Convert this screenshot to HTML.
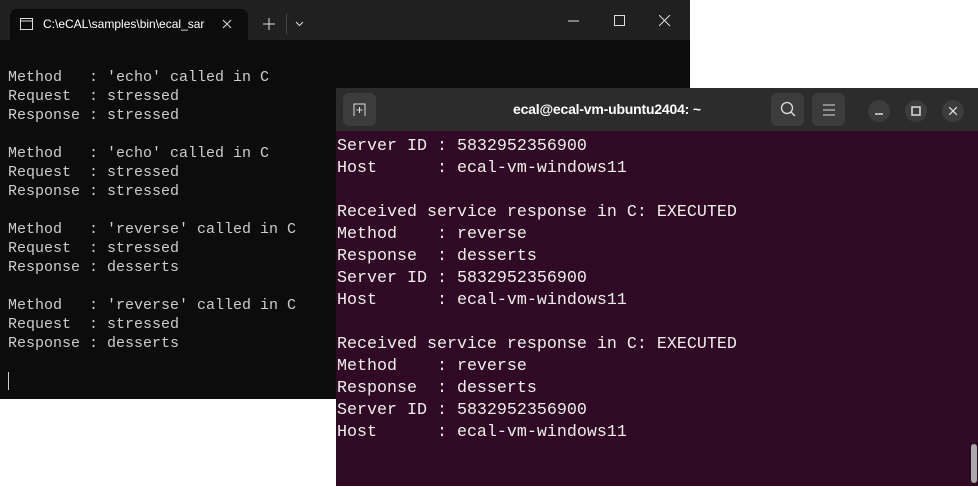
<!DOCTYPE html>
<html><head><style>
html,body{margin:0;padding:0;width:978px;height:490px;background:#fff;overflow:hidden;position:relative}
.win{position:absolute;left:0;top:0;width:690px;height:399px;background:#0c0c0c}
.wtitle{position:absolute;left:0;top:0;width:690px;height:40px;background:#202020}
.tab{position:absolute;left:10px;top:9px;width:238px;height:31px;background:#0c0c0c;border-radius:7px 7px 0 0}
.tab span{position:absolute;left:33px;top:8px;width:165px;overflow:hidden;white-space:nowrap;font:12px "Liberation Sans",sans-serif;color:#fff}
.wtxt{position:absolute;left:8px;top:68px;font:15px/19px "Liberation Mono",monospace;color:#cccccc;white-space:pre;margin:0}
.ub{position:absolute;left:336px;top:88px;width:642px;height:398px;background:#300a24}
.uhead{position:absolute;left:0;top:0;width:642px;height:43px;background:#2c2c2c}
.btn{position:absolute;top:5px;width:33px;height:33px;background:#3c3c3c;border-radius:6px}
.circ{position:absolute;top:12px;width:22px;height:22px;background:#3c3c3c;border-radius:50%}
.utxt{position:absolute;left:1px;top:48px;font:16.67px/22px "Liberation Mono",monospace;color:#eeeeec;white-space:pre;margin:0}
</style></head><body>
<div class="win">
 <div class="wtitle">
  <div class="tab">
   <svg style="position:absolute;left:10px;top:9px" width="13" height="12"><rect x="0.5" y="0.5" width="12" height="11" fill="none" stroke="#ddd"/><line x1="1" y1="3" x2="12" y2="3" stroke="#ddd"/></svg>
   <span>C:\eCAL\samples\bin\ecal_sar</span>
   <svg style="position:absolute;left:212px;top:10px" width="10" height="10"><path d="M1 1L9 9M9 1L1 9" stroke="#ddd"/></svg>
  </div>
  <svg style="position:absolute;left:263px;top:18px" width="12" height="12"><path d="M6 0V12M0 6H12" stroke="#ddd"/></svg>
  <div style="position:absolute;left:286px;top:14px;width:1px;height:20px;background:#444"></div>
  <svg style="position:absolute;left:295px;top:21px" width="9" height="6"><path d="M1 1L4.5 4.5L8 1" stroke="#ddd" fill="none"/></svg>
  <svg style="position:absolute;left:568px;top:20px" width="11" height="2"><path d="M0 1H11" stroke="#ddd"/></svg>
  <svg style="position:absolute;left:614px;top:15px" width="12" height="12"><rect x="0.5" y="0.5" width="10" height="10" fill="none" stroke="#ddd"/></svg>
  <svg style="position:absolute;left:659px;top:15px" width="12" height="12"><path d="M0 0L11 11M11 0L0 11" stroke="#ddd"/></svg>
 </div>
<pre class="wtxt">Method   : 'echo' called in C
Request  : stressed
Response : stressed

Method   : 'echo' called in C
Request  : stressed
Response : stressed

Method   : 'reverse' called in C
Request  : stressed
Response : desserts

Method   : 'reverse' called in C
Request  : stressed
Response : desserts</pre>
 <div style="position:absolute;left:8px;top:372px;width:1px;height:18px;background:#ccc"></div>
</div>
<div class="ub">
 <div class="uhead">
  <div class="btn" style="left:7px"><svg style="position:absolute;left:10px;top:10px" width="13" height="13"><path d="M1 13V1H12V13M6.5 4V10M3.5 7H9.5" stroke="#ddd" fill="none"/></svg></div>
  <div style="position:absolute;left:177px;top:13px;font:bold 14px 'Liberation Sans',sans-serif;color:#fff;letter-spacing:-0.2px">ecal@ecal-vm-ubuntu2404: ~</div>
  <div class="btn" style="left:435px"><svg style="position:absolute;left:9px;top:8px" width="16" height="17"><circle cx="7" cy="7" r="5.5" stroke="#ddd" fill="none" stroke-width="1.3"/><path d="M11 11L15 15" stroke="#ddd" stroke-width="1.3"/></svg></div>
  <div class="btn" style="left:476px"><svg style="position:absolute;left:11px;top:11px" width="12" height="12"><path d="M0 1H12M0 6H12M0 11H12" stroke="#ddd"/></svg></div>
  <div class="circ" style="left:532px"><svg style="position:absolute;left:7px;top:13px" width="8" height="2"><path d="M0 1H8" stroke="#ddd" stroke-width="1.5"/></svg></div>
  <div class="circ" style="left:569px"><svg style="position:absolute;left:6px;top:6px" width="10" height="10"><rect x="1" y="1" width="8" height="8" fill="none" stroke="#ddd" stroke-width="1.5"/></svg></div>
  <div class="circ" style="left:606px"><svg style="position:absolute;left:7px;top:7px" width="8" height="8"><path d="M0 0L8 8M8 0L0 8" stroke="#ddd" stroke-width="1.3"/></svg></div>
 </div>
<pre class="utxt">Server ID : 5832952356900
Host      : ecal-vm-windows11

Received service response in C: EXECUTED
Method    : reverse
Response  : desserts
Server ID : 5832952356900
Host      : ecal-vm-windows11

Received service response in C: EXECUTED
Method    : reverse
Response  : desserts
Server ID : 5832952356900
Host      : ecal-vm-windows11</pre>
 <div style="position:absolute;left:635px;top:356px;width:6px;height:39px;background:#a8a8a8;border-radius:3px"></div>
</div>
</body></html>
